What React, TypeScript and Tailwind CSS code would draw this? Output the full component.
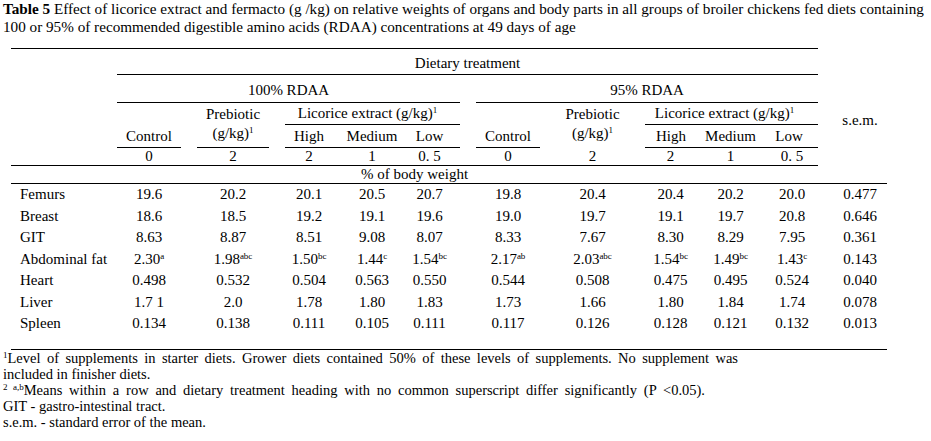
const serif = "font-['Liberation_Serif','Times_New_Roman',serif]";

type Val = string | [string, string];

const rows: [string, ...Val[]][] = [
  ["Femurs", "19.6", "20.2", "20.1", "20.5", "20.7", "19.8", "20.4", "20.4", "20.2", "20.0", "0.477"],
  ["Breast", "18.6", "18.5", "19.2", "19.1", "19.6", "19.0", "19.7", "19.1", "19.7", "20.8", "0.646"],
  ["GIT", "8.63", "8.87", "8.51", "9.08", "8.07", "8.33", "7.67", "8.30", "8.29", "7.95", "0.361"],
  [
    "Abdominal fat",
    ["2.30", "a"],
    ["1.98", "abc"],
    ["1.50", "bc"],
    ["1.44", "c"],
    ["1.54", "bc"],
    ["2.17", "ab"],
    ["2.03", "abc"],
    ["1.54", "bc"],
    ["1.49", "bc"],
    ["1.43", "c"],
    "0.143",
  ],
  ["Heart", "0.498", "0.532", "0.504", "0.563", "0.550", "0.544", "0.508", "0.475", "0.495", "0.524", "0.040"],
  ["Liver", "1.7 1", "2.0", "1.78", "1.80", "1.83", "1.73", "1.66", "1.80", "1.84", "1.74", "0.078"],
  ["Spleen", "0.134", "0.138", "0.111", "0.105", "0.111", "0.117", "0.126", "0.128", "0.121", "0.132", "0.013"],
];

// horizontal nudges so numbers sit under their headings
const pads = [
  "pl-[9px] justify-start",
  "pr-[8px] justify-center",
  "justify-center",
  "justify-center",
  "justify-center",
  "pr-[12px] justify-center",
  "justify-center",
  "justify-center",
  "pl-[3px] justify-center",
  "justify-center",
  "pl-[6px] justify-center",
  "pl-[15px] justify-center",
];

const widths = ["w-[106px]", "w-[72px]", "w-[88px]", "w-[64px]", "w-[62px]", "w-[65px]", "w-[80px]", "w-[89px]", "w-[64px]", "w-[59px]", "w-[58px]", "w-[69px]"];

function Sup({ children }: { children: React.ReactNode }) {
  return <sup className="relative -top-[5px] text-[9px]">{children}</sup>;
}

function Cell({ v }: { v: Val }) {
  if (Array.isArray(v)) {
    return (
      <span>
        {v[0]}
        <Sup>{v[1]}</Sup>
      </span>
    );
  }
  return <span>{v}</span>;
}

function PrebioticHead() {
  return (
    <div className="flex flex-col items-center pt-[2px] leading-[19px]">
      <span>Prebiotic</span>
      <span>
        (g/kg)<Sup>1</Sup>
      </span>
    </div>
  );
}

export default function App() {
  return (
    <div className={`min-h-[441px] w-[931px] bg-white text-black ${serif}`}>
      <p className="pl-[3px] text-[15.2px] leading-[18px]">
        <b>Table 5</b> Effect of licorice extract and fermacto (g /kg) on relative weights of organs and body parts in all groups of broiler chickens fed diets containing
        <br />
        100 or 95% of recommended digestible amino acids (RDAA) concentrations at 49 days of age
      </p>

      <table className={`mt-[12px] ml-[11px] w-[876px] table-fixed text-[15px] leading-[17px] text-black ${serif}`}>
        <colgroup>
          {widths.map((w, i) => (
            <col key={i} className={w} />
          ))}
        </colgroup>
        <thead>
          <tr>
            <td rowSpan={5} className="align-top">
              <div className="h-[118px] border-y border-black" />
            </td>
            <td colSpan={10} className="align-top">
              <div className="flex h-[27px] items-center justify-center border-y border-black pt-[4px]">Dietary treatment</div>
            </td>
            <td className="align-top">
              <div className="h-[27px]" />
            </td>
          </tr>
          <tr>
            <td colSpan={5} className="align-top">
              <div className="mr-[8px] flex h-[28px] items-center justify-center border-b border-black pt-[3px]">100% RDAA</div>
            </td>
            <td colSpan={5} className="align-top">
              <div className="ml-[8px] flex h-[28px] items-center justify-center border-b border-black pt-[3px]">95% RDAA</div>
            </td>
            <td rowSpan={4} className="align-top">
              <div className="flex h-[91px] items-center justify-center pl-[15px]">s.e.m.</div>
            </td>
          </tr>
          <tr>
            <td rowSpan={2} className="align-top">
              <div className="mr-[8px] flex h-[45px] items-end justify-center border-b border-black pb-[2px]">Control</div>
            </td>
            <td rowSpan={2} className="align-top">
              <div className="mx-[8px] h-[45px] border-b border-black">
                <PrebioticHead />
              </div>
            </td>
            <td colSpan={3} className="align-top">
              <div className="mx-[8px] flex h-[22px] items-center justify-center border-b border-black pr-[10px]">
                <span>
                  Licorice extract (g/kg)<Sup>1</Sup>
                </span>
              </div>
            </td>
            <td rowSpan={2} className="align-top">
              <div className="mx-[8px] flex h-[45px] items-end justify-center border-b border-black pb-[2px]">Control</div>
            </td>
            <td rowSpan={2} className="align-top">
              <div className="h-[45px]">
                <PrebioticHead />
              </div>
            </td>
            <td colSpan={3} className="align-top">
              <div className="ml-[8px] flex h-[22px] items-center justify-center border-b border-black pr-[14px]">
                <span>
                  Licorice extract (g/kg)<Sup>1</Sup>
                </span>
              </div>
            </td>
          </tr>
          <tr>
            <td className="align-top">
              <div className="ml-[8px] flex h-[23px] items-center justify-center border-b border-black pr-[8px]">High</div>
            </td>
            <td className="align-top">
              <div className="flex h-[23px] items-center justify-center border-b border-black">Medium</div>
            </td>
            <td className="align-top">
              <div className="mr-[8px] flex h-[23px] items-center justify-center border-b border-black pr-[4px]">Low</div>
            </td>
            <td className="align-top">
              <div className="ml-[8px] flex h-[23px] items-center justify-center border-b border-black pr-[4px]">High</div>
            </td>
            <td className="align-top">
              <div className="flex h-[23px] items-center justify-center border-b border-black">Medium</div>
            </td>
            <td className="align-top">
              <div className="flex h-[23px] items-center justify-center border-b border-black">Low</div>
            </td>
          </tr>
          <tr>
            {["0", "2", "2", "1", "0. 5", "0", "2", "2", "1", "0. 5"].map((v, i) => (
              <td key={i} className="align-top">
                <div className={`flex h-[18px] items-center border-b border-black ${pads[i + 1]}`}>{v}</div>
              </td>
            ))}
          </tr>
          <tr>
            <td colSpan={11} className="align-top">
              <div className="flex h-[18px] items-center justify-center border-b border-black">% of body weight</div>
            </td>
            <td className="align-top">
              <div className="h-[18px] border-b border-black" />
            </td>
          </tr>
        </thead>
        <tbody>
          {rows.map((row, r) => {
            const last = r === rows.length - 1;
            return (
              <tr key={row[0] as string}>
                {row.map((v, i) => (
                  <td key={i} className="align-top">
                    {last ? (
                      <div className="h-[37px] border-b border-black">
                        <div className={`flex h-[21.5px] items-center ${pads[i]}`}>
                          <Cell v={v} />
                        </div>
                      </div>
                    ) : (
                      <div className={`flex h-[21.5px] items-center ${pads[i]}`}>
                        <Cell v={v} />
                      </div>
                    )}
                  </td>
                ))}
              </tr>
            );
          })}
        </tbody>
      </table>

      <div className="pl-[3px] text-[14.5px] leading-[16px]">
        <p>
          <span className="inline-block w-[735px] text-justify [text-align-last:justify]">
            <Sup>1</Sup>
            Level of supplements in starter diets. Grower diets contained 50% of these levels of supplements. No supplement was
          </span>
          <br />
          included in finisher diets.
        </p>
        <p>
          <span className="inline-block w-[702px] text-justify [text-align-last:justify]">
            <Sup>2 a,b</Sup>
            Means within a row and dietary treatment heading with no common superscript differ significantly (P &lt;0.05).
          </span>
        </p>
        <p>GIT - gastro-intestinal tract.</p>
        <p>s.e.m. - standard error of the mean.</p>
      </div>
    </div>
  );
}
